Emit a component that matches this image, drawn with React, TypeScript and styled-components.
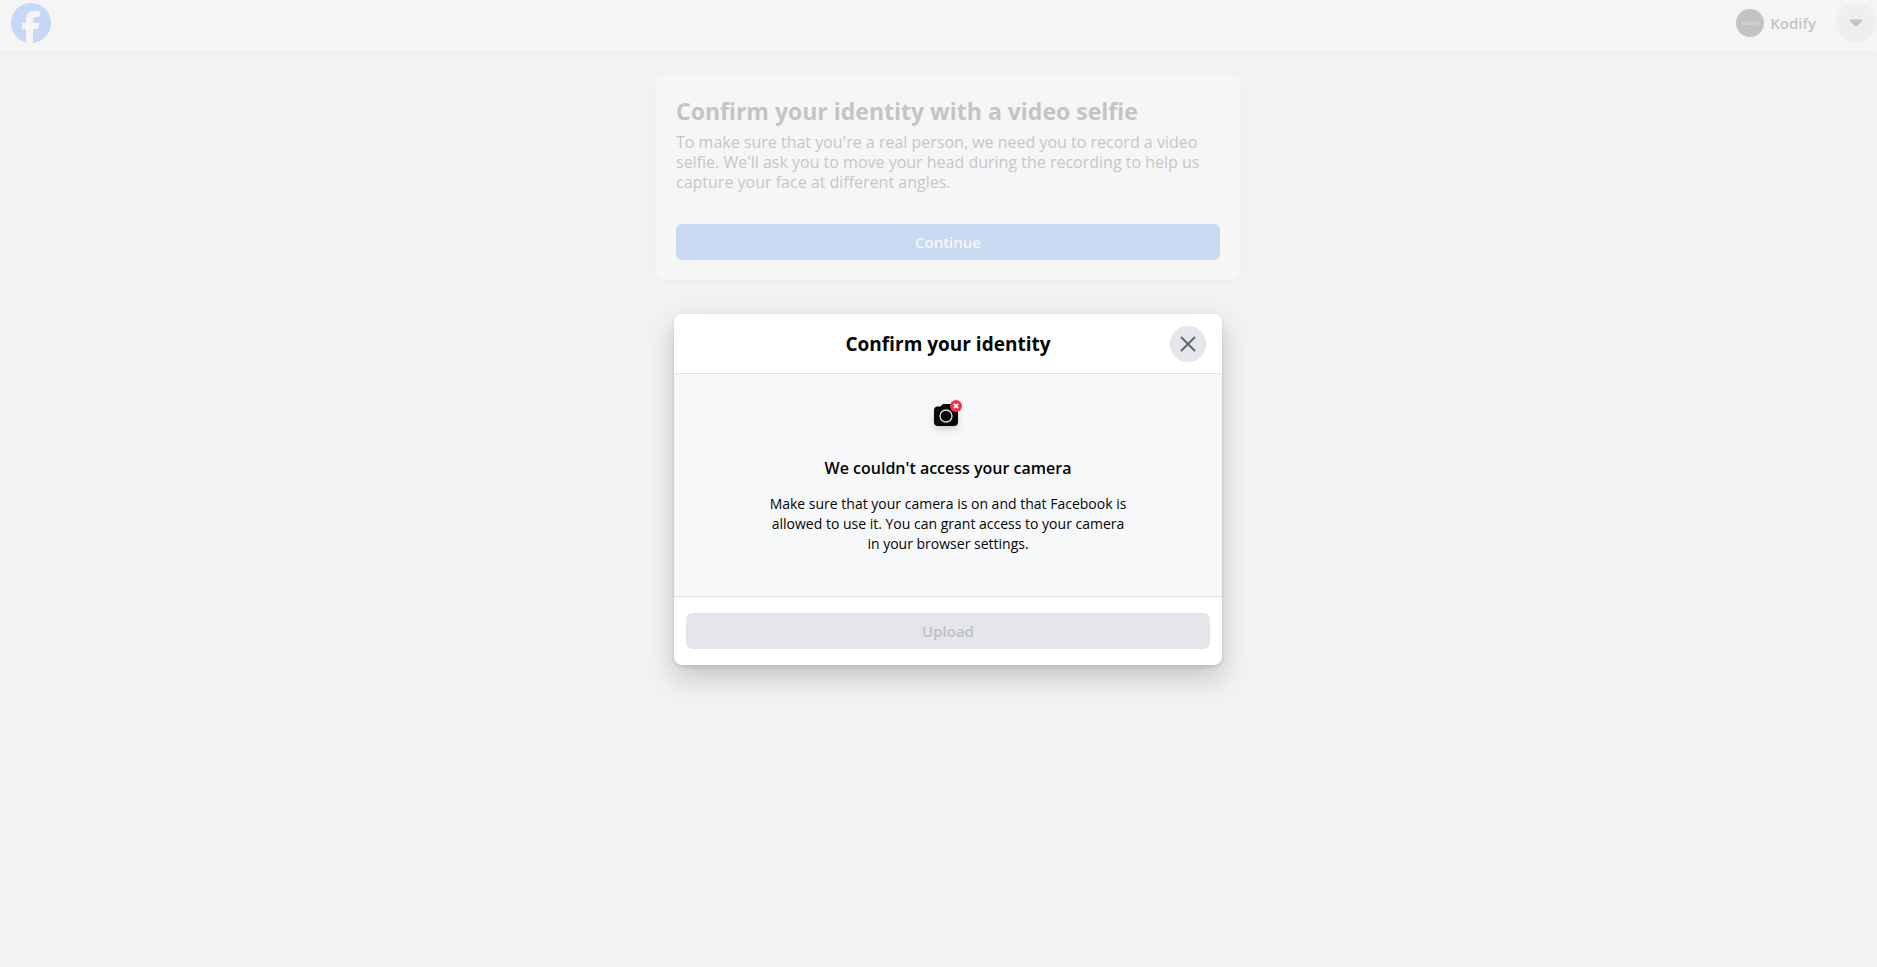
import React from "react";
import styled, { createGlobalStyle } from "styled-components";

const GlobalStyle = createGlobalStyle`
  * { box-sizing: border-box; }
  body {
    margin: 0;
    background: #f2f2f2;
    color: #050505;
    font-family: "Segoe UI", "Open Sans", "Noto Sans", sans-serif;
  }
  h1, h2, h3, p { margin: 0; }
  button { font-family: inherit; border: 0; padding: 0; }
`;

const Page = styled.div`
  min-height: 100vh;
`;

const TopBar = styled.header`
  display: flex;
  align-items: center;
  justify-content: space-between;
  height: 51px;
  padding: 0 1px 5px 11px;
  background: #f5f5f5;
  box-shadow: 0 1px 2px #eeeeee;
`;

const LogoLink = styled.a`
  display: block;
  height: 40px;
`;

const Account = styled.div`
  display: flex;
  align-items: center;
`;

const Profile = styled.a`
  display: flex;
  align-items: center;
  gap: 6px;
  margin-right: 20px;
  color: #c4c4c4;
  font-size: 15px;
  font-weight: 600;
  line-height: 20px;
  text-decoration: none;
`;

const Avatar = styled.span`
  display: flex;
  align-items: center;
  justify-content: center;
  width: 28px;
  height: 28px;
  border-radius: 50%;
  background: #c3c3c3;
  color: #d9d9d9;
  font-size: 6px;
  line-height: 8px;
`;

const RoundButton = styled.button<{ $size: number; $fill: string }>`
  display: flex;
  align-items: center;
  justify-content: center;
  width: ${(p) => p.$size}px;
  height: ${(p) => p.$size}px;
  border-radius: 50%;
  background: ${(p) => p.$fill};
`;

const Content = styled.main`
  display: flex;
  flex-direction: column;
  align-items: center;
  padding: 24px 0 24px 19px;
`;

const Card = styled.section`
  width: 100%;
  max-width: 584px;
  padding: 20px;
  border-radius: 8px;
  background: #f6f6f6;
  box-shadow: 0 1px 2px #ececec;
`;

const CardTitle = styled.h1`
  color: #c4c4c4;
  font-size: 23px;
  font-weight: 700;
  line-height: 32px;
`;

const CardText = styled.p`
  margin: 5px 0 32px;
  color: #c6c6c6;
  font-size: 16px;
  line-height: 20px;
`;

const WideButton = styled.button<{ $muted?: boolean }>`
  display: block;
  width: 100%;
  height: 36px;
  border-radius: 6px;
  background: ${(p) => (p.$muted ? "#e4e6eb" : "#c8daf2")};
  color: ${(p) => (p.$muted ? "#bcc0c4" : "#f6f6f6")};
  font-size: 15px;
  font-weight: 600;
  line-height: 20px;
`;

const Dialog = styled.div`
  width: 100%;
  max-width: 548px;
  margin-top: 34px;
  border-radius: 8px;
  background: #ffffff;
  box-shadow: 0 12px 28px rgba(0, 0, 0, 0.2), 0 2px 4px rgba(0, 0, 0, 0.1);
`;

const DialogHeader = styled.div`
  display: grid;
  grid-template-columns: 36px 1fr 36px;
  align-items: center;
  height: 60px;
  padding: 0 16px;
  border-bottom: 1px solid #e2e3e5;
`;

const DialogTitle = styled.h2`
  grid-column: 2;
  font-size: 19px;
  font-weight: 700;
  line-height: 24px;
  text-align: center;
`;

const DialogBody = styled.div`
  display: flex;
  flex-direction: column;
  align-items: center;
  padding: 20px 16px 42px;
  background: #f7f8fa;
  text-align: center;
`;

const Notice = styled.h3`
  margin-top: 20px;
  font-size: 16px;
  font-weight: 600;
  line-height: 20px;
`;

const Hint = styled.p`
  max-width: 360px;
  margin-top: 16px;
  font-size: 14px;
  line-height: 20px;
`;

const DialogFooter = styled.div`
  padding: 16px 12px;
  border-top: 1px solid #e2e3e5;
`;

function FacebookLogo() {
  return (
    <svg width="40" height="40" viewBox="0 0 40 40" aria-hidden="true">
      <circle cx="20" cy="20" r="20" fill="#c5d8f8" />
      <path
        fill="#f6f6f6"
        d="M15 39.4V26h-4v-6h4v-2.6C15 10.800 18 7.800 24.400 7.800c1.300 0 3.500.2 4.400.5v5.500c-.5-.1-1.300-.1-2.300-.1-3.300 0-4.500 1.200-4.500 4.400V20h6.300l-1.100 6H22v13.800c-2.300.3-4.700.200-7-.4Z"
      />
    </svg>
  );
}

function CaretDown() {
  return (
    <svg width="14" height="10" viewBox="0 0 14 10" aria-hidden="true">
      <path
        d="M2 1.500h10c1 0 1.400 1.100.7 1.800L8 8.200c-.6.6-1.400.6-2 0L1.300 3.300C.6 2.600 1 1.500 2 1.500Z"
        fill="#c4c4c4"
      />
    </svg>
  );
}

function CrossIcon() {
  return (
    <svg width="20" height="20" viewBox="0 0 20 20" aria-hidden="true">
      <path
        d="M3.500 3.500l13 13M16.500 3.500l-13 13"
        stroke="#606770"
        strokeWidth="2"
        strokeLinecap="round"
      />
    </svg>
  );
}

function CameraBlocked() {
  return (
    <svg width="44" height="44" viewBox="0 0 44 44" aria-hidden="true">
      <g style={{ filter: "drop-shadow(0 3px 3px rgba(0,0,0,.18))" }}>
        <path
          fill="#050505"
          d="M12 12.500h2.500l2-2c.4-.4.8-.5 1.400-.5h6.200c.6 0 1 .1 1.400.5l2 2H28a4 4 0 0 1 4 4V28a4 4 0 0 1-4 4H12a4 4 0 0 1-4-4V16.500a4 4 0 0 1 4-4Z"
        />
      </g>
      <circle cx="20" cy="22" r="6" fill="none" stroke="#dfe0e2" strokeWidth="1.300" />
      <circle cx="30" cy="12" r="6" fill="#f3314f" />
      <path d="M27.900 9.900l4.200 4.200M32.100 9.900l-4.200 4.200" stroke="#fff" strokeWidth="1.700" />
    </svg>
  );
}

export default function App() {
  return (
    <Page>
      <GlobalStyle />
      <TopBar>
        <LogoLink href="#" aria-label="Facebook">
          <FacebookLogo />
        </LogoLink>
        <Account>
          <Profile href="#">
            <Avatar aria-hidden="true">kodify</Avatar>
            Kodify
          </Profile>
          <RoundButton $size={40} $fill="#efefef" aria-label="Account menu">
            <CaretDown />
          </RoundButton>
        </Account>
      </TopBar>
      <Content>
        <Card>
          <CardTitle>Confirm your identity with a video selfie</CardTitle>
          <CardText>
            To make sure that you're a real person, we need you to record a video selfie. We'll ask
            you to move your head during the recording to help us capture your face at different
            angles.
          </CardText>
          <WideButton>Continue</WideButton>
        </Card>
        <Dialog role="dialog" aria-labelledby="dialog-title">
          <DialogHeader>
            <DialogTitle id="dialog-title">Confirm your identity</DialogTitle>
            <RoundButton $size={36} $fill="#e4e6eb" aria-label="Close">
              <CrossIcon />
            </RoundButton>
          </DialogHeader>
          <DialogBody>
            <CameraBlocked />
            <Notice>We couldn't access your camera</Notice>
            <Hint>
              Make sure that your camera is on and that Facebook is allowed to use it. You can grant
              access to your camera in your browser settings.
            </Hint>
          </DialogBody>
          <DialogFooter>
            <WideButton $muted disabled>
              Upload
            </WideButton>
          </DialogFooter>
        </Dialog>
      </Content>
    </Page>
  );
}
